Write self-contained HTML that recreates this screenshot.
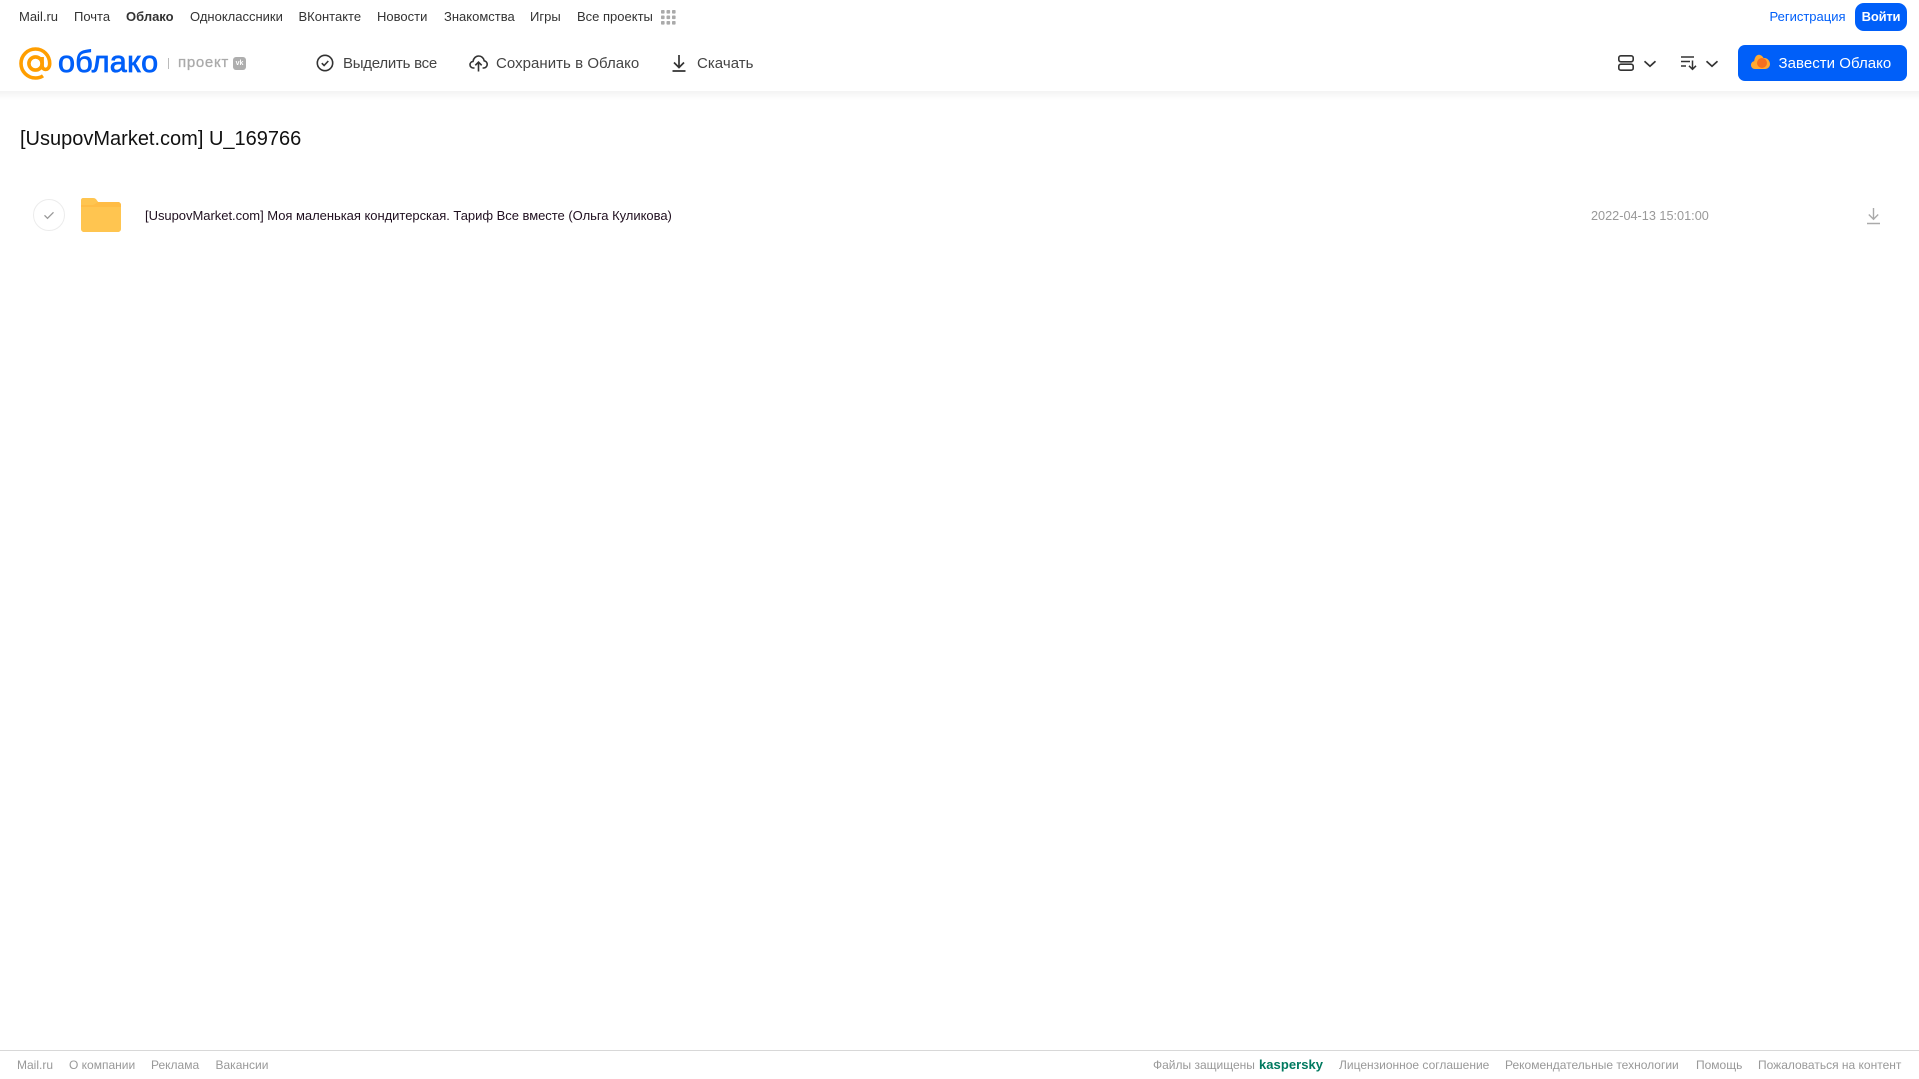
<!DOCTYPE html>
<html lang="ru"><head><meta charset="utf-8"><title>Облако</title>
<style>
html,body{margin:0;padding:0;background:#fff;width:1919px;height:1079px;overflow:hidden}
body{font-family:"Liberation Sans","Noto Sans CJK SC",sans-serif;position:relative}
.t{position:absolute;white-space:nowrap;line-height:18px}
.n{font-size:13px;color:#333;top:8px}
.a{font-size:15px;color:#444;top:54px;letter-spacing:.04px;line-height:19px}
.f{font-size:12px;color:#999;top:1056px}
svg{position:absolute;overflow:visible}
</style></head><body>
<div style="position:absolute;left:0;top:91px;width:1919px;height:9px;background:linear-gradient(#f3f3f3,#fff)"></div>

<span class="t n" style="left:19px">Mail.ru</span>
<span class="t n" style="left:74px">Почта</span>
<span class="t n" style="left:126px;font-weight:bold">Облако</span>
<span class="t n" style="left:190px">Одноклассники</span>
<span class="t n" style="left:298.500px">ВКонтакте</span>
<span class="t n" style="left:377px">Новости</span>
<span class="t n" style="left:444px">Знакомства</span>
<span class="t n" style="left:530px">Игры</span>
<span class="t n" style="left:577px">Все проекты</span>
<svg style="left:661px;top:10px" width="15" height="15" fill="#aaa"><rect x="0" y="0" width="3.6" height="3.6" rx=".8"/><rect x="5.5" y="0" width="3.6" height="3.6" rx=".8"/><rect x="11" y="0" width="3.6" height="3.6" rx=".8"/><rect x="0" y="5.5" width="3.6" height="3.6" rx=".8"/><rect x="5.5" y="5.5" width="3.6" height="3.6" rx=".8"/><rect x="11" y="5.5" width="3.6" height="3.6" rx=".8"/><rect x="0" y="11" width="3.6" height="3.6" rx=".8"/><rect x="5.5" y="11" width="3.6" height="3.6" rx=".8"/><rect x="11" y="11" width="3.6" height="3.6" rx=".8"/></svg>

<svg style="left:19px;top:47px" width="33" height="33" fill="none" stroke="#ff9e00" stroke-width="3.600"><circle cx="16.500" cy="16.500" r="6.600"/><path d="M23.100 10v8.500c0 5.500 7.600 5.500 7.600-2C30.700 8.500 24.500 2 16.500 2 8.500 2 2 8.500 2 16.500S8.500 31 16.500 31c3 0 5.500-.8 7.500-2.200"/></svg>
<span class="t" style="left:58px;top:46px;font-size:31px;line-height:32px;color:#005ff9;-webkit-text-stroke:.8px #005ff9;letter-spacing:.3px;transform-origin:0 50%;transform:scaleX(.985)">облако</span>
<div style="position:absolute;left:168px;top:58px;width:1px;height:11px;background:#bbb"></div>
<span class="t" style="left:178px;top:54px;font-size:15px;color:#aaa;-webkit-text-stroke:.3px #aaa;letter-spacing:.7px">проект</span>
<div style="position:absolute;left:233px;top:57px;width:13px;height:13px;border-radius:3px;background:#aeaeae;color:#fff;font-size:7px;font-weight:bold;line-height:13px;text-align:center">vk</div>

<svg style="left:316px;top:54px" width="18" height="18" fill="none" stroke="#333" stroke-width="1.600"><circle cx="9" cy="9" r="7.700"/><path d="M5.800 9.200l2.300 2.300 4.200-4.500"/></svg>
<span class="t a" style="left:343px;letter-spacing:-.25px">Выделить все</span>
<svg style="left:469px;top:54px" width="19" height="18" fill="none" stroke="#333" stroke-width="1.600"><path d="M5.500 14H4.500C2.500 14 1 12.500 1 10.700 1 9 2.300 7.600 4 7.400 4.500 4.200 6.800 2 9.700 2c2.800 0 5 2 5.500 4.800 1.700.3 3 1.800 3 3.600 0 2-1.600 3.600-3.600 3.600h-1"/><path d="M9.500 17.500V8.500M6.300 11.300l3.200-3.200 3.200 3.200"/></svg>
<span class="t a" style="left:496px">Сохранить в Облако</span>
<svg style="left:671px;top:54px" width="16" height="18" fill="none" stroke="#333" stroke-width="1.700"><path d="M8 1v12M3 8.500L8 13.500l5-5M1.500 17h13"/></svg>
<span class="t a" style="left:697px">Скачать</span>

<svg style="left:1618px;top:55px" width="16" height="16" fill="none" stroke="#333" stroke-width="1.600"><rect x=".8" y=".8" width="14.400" height="6" rx="2"/><rect x=".8" y="9.200" width="14.400" height="6" rx="2"/></svg>
<svg style="left:1644px;top:60px" width="13" height="8" fill="none" stroke="#333" stroke-width="1.700"><path d="M.5 1.200l5.500 5 5.500-5"/></svg>
<svg style="left:1681px;top:56px" width="17" height="14" fill="none" stroke="#333" stroke-width="1.500"><path d="M0 1h13M0 5.500h9M0 10h5M11.500 4.500v8.500M8 9.800l3.500 3.500 3.500-3.500"/></svg>
<svg style="left:1706px;top:60px" width="13" height="8" fill="none" stroke="#333" stroke-width="1.700"><path d="M.5 1.200l5.500 5 5.500-5"/></svg>

<span class="t" style="left:1769.500px;top:8px;font-size:13px;color:#005ff9">Регистрация</span>
<div style="position:absolute;left:1855px;top:3px;width:52px;height:28px;border-radius:9px;background:#005ff9;color:#fff;font-size:13px;font-weight:bold;line-height:27px;text-align:center;letter-spacing:-.2px">Войти</div>
<div style="position:absolute;left:1738px;top:45px;width:169px;height:36px;border-radius:7px;background:#005ff9"></div>
<svg style="left:1751px;top:54px" width="19" height="16"><path d="M4 15C1.700 15 0 13.300 0 11c0-2 1.300-3.500 3.200-3.900C3.700 3 6 0 9 1c2 .5 3 2 3.500 3C16 3.500 19 6.500 19 10c0 3-2.300 5-5 5z" fill="#ffa930"/><circle cx="11" cy="9" r="5" fill="#f4701f"/></svg>
<span class="t a" style="left:1778.500px;color:#fff">Завести Облако</span>

<span class="t" style="left:20px;top:126.500px;font-size:20px;line-height:24px;color:#111">[UsupovMarket.com] U_169766</span>

<svg style="left:33px;top:199px" width="32" height="32" fill="none"><circle cx="16" cy="16" r="15.500" stroke="#ececec"/><path d="M11.500 16.300l3 3 6-6" stroke="#999" stroke-width="1.300"/></svg>
<svg style="left:81px;top:198px" width="40" height="34"><path d="M2 0h10c2 0 3 .8 4 2.500l1.200 1.500H37c1.700 0 3 1.300 3 3v24c0 1.700-1.300 3-3 3H3c-1.700 0-3-1.300-3-3V2c0-1.100.9-2 2-2z" fill="#ffc550"/><path d="M0 9h40v-2c0-1.700-1.300-3-3-3H17L14 6c-1 .8-2 1-3 1H0z" fill="#ffbc45"/></svg>
<span class="t" style="left:145px;top:207px;font-size:13px;color:#201020;letter-spacing:-.03px">[UsupovMarket.com] Моя маленькая кондитерская. Тариф Все вместе (Ольга Куликова)</span>
<span class="t" style="left:1591px;top:207px;font-size:12.700px;color:#999">2022-04-13 15:01:00</span>
<svg style="left:1867px;top:207px" width="13" height="18" fill="none" stroke="#aaa" stroke-width="1.400"><path d="M6.500 1v11M1.800 7.500l4.700 4.700 4.700-4.700M0 16.500h13"/></svg>

<div style="position:absolute;left:0;top:1050px;width:1919px;height:1px;background:#d8d8d8"></div>
<span class="t f" style="left:17px">Mail.ru</span>
<span class="t f" style="left:69px">О компании</span>
<span class="t f" style="left:151px">Реклама</span>
<span class="t f" style="left:215.500px">Вакансии</span>
<span class="t f" style="left:1153px">Файлы защищены</span>
<span class="t f" style="left:1259px;font-weight:bold;font-size:13px;color:#00795f;letter-spacing:.05px">kaspersky</span>
<span class="t f" style="left:1339px">Лицензионное соглашение</span>
<span class="t f" style="left:1505px">Рекомендательные технологии</span>
<span class="t f" style="left:1696px">Помощь</span>
<span class="t f" style="left:1758px">Пожаловаться на контент</span>
</body></html>
